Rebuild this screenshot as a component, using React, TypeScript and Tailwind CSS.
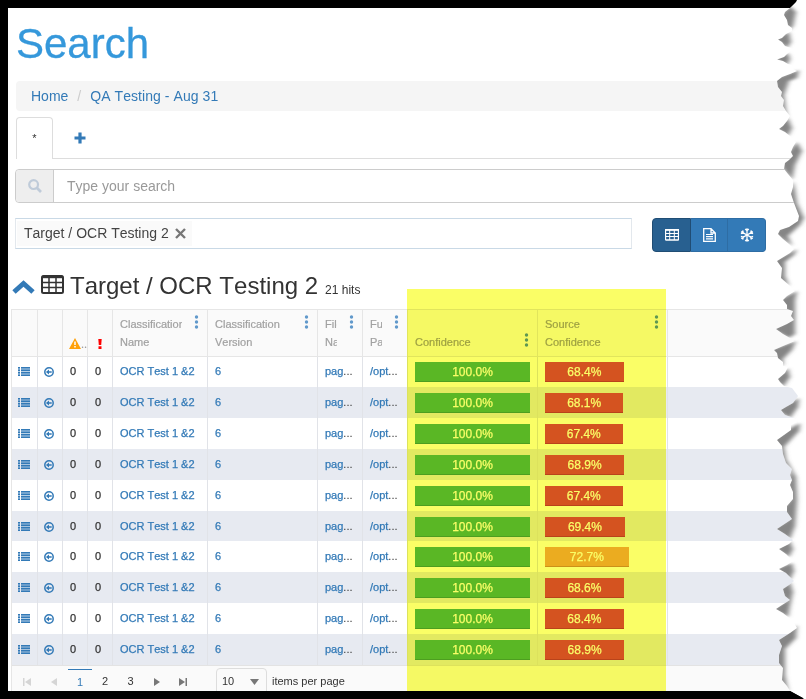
import React from "react";

const rows = [68.4, 68.1, 67.4, 68.9, 67.4, 69.4, 72.7, 68.6, 68.4, 68.9];

const COLS =
  "grid grid-cols-[26px_25px_25px_25px_95px_110px_45px_45px_130px_130px_1fr]";

// Left boundary of the torn paper edge, top to bottom.
const EDGE =
  "M797 0 L796 2 790 8 785 12 784 15 787 20 788 25 792 28 792 31 786 34 782 38 778 39.500 782 42 785 46 791 48 792 50 787 54 784 57 777 59.500 783 61 788 64 792 65 793 69 797 71 790 74 782 77 777 81 778 87 782 92 781 96 784 100 783 106 786 111 790 116 787 121 783 126 779 129 785 132 790 136 796 142 793 147 791 152 793 156 789 160 785 163 784 169 788 174 793 180 793 187 791 194 794 203 799 216 798 221 789 227 780 230 778 234 783 239 789 244 794 249 790 253 777 261 782 268 781 278 790 286 795 291 787 296 783 300 787 305 787 309 793 311 791 316 794 320 787 324 776 329 783 334 795 341 783 346 774 350 777 353 778 358 783 362 783 366 788 367 785 373 778 379 780 382 784 386 792 388 798 396 793 403 786 407 781 410 785 415 794 418 797 422 791 425 791 430 784 435 777 440 782 446 783 454 786 463 792 469 790 475 792 480 790 485 793 492 793 499 787 506 787 512 792 519 783 525 777 529 785 534 793 540 789 544 779 549 786 554 793 561 787 565 779 569 786 573 794 581 789 585 783 589 785 596 790 600 782 605 776 609 783 613 788 617 793 621 797 628 790 633 779 640 782 646 779 655 779 663 783 668 782 680 787 686 790 691 806 700 V700 H806 V0Z";

const SHADES = [
  "M790 6 L780 15 788 31 793 26 796 12Z",
  "M789 32 L774 39 787 48 791 42Z",
  "M788 53 L774 59 787 65 790 59Z",
  "M799 70 L773 79 780 112 787 119 784 95 789 81 797 78Z",
  "M788 118 L775 128 788 136 792 128Z",
  "M797 142 L789 151 780 165 792 180 795 165 802 151Z",
  "M793 181 L787 195 794 218 773 233 792 246 788 236 800 225 804 218 797 203 795 190Z",
  "M797 249 L773 261 777 279 789 286 785 276 785 262 794 255Z",
  "M797 291 L779 300 786 312 789 320 772 329 789 338 795 334 795 301Z",
  "M796 341 L770 350 774 360 783 366 783 359 792 350Z",
  "M788 368 L774 379 783 387 790 377Z",
  "M799 398 L776 410 790 418 798 407Z",
  "M800 423 L787 430 772 440 778 457 790 472 787 485 790 500 782 509 788 520 772 529 790 539 795 526 797 500 796 477 786 459 784 447 799 431Z",
  "M790 541 L775 549 789 557 793 549Z",
  "M792 563 L775 569 790 580 794 571Z",
  "M790 582 L778 590 786 601 772 609 788 617 790 606 793 592Z",
  "M797 625 L775 640 775 664 780 687 788 691 785 675 785 649 796 638Z",
];

function TornEdge() {
  return (
    <svg
      className="pointer-events-none absolute right-0 top-0 z-20"
      width="46"
      height="699"
      viewBox="760 0 46 699"
    >
      <defs>
        <clipPath id="paper-outside">
          <path d={EDGE} />
        </clipPath>
        <filter id="soft" x="-60%" y="-20%" width="220%" height="140%">
          <feGaussianBlur stdDeviation="2.5 1.3" />
        </filter>
      </defs>
      <path d={EDGE} fill="#fff" />
      <g clipPath="url(#paper-outside)">
        <g fill="#858585" filter="url(#soft)">
          {SHADES.map((d) => (
            <path key={d} d={d} />
          ))}
        </g>
      </g>
      <path d="M760 691 H790 L803 698 V699 H760Z" fill="#000" />
    </svg>
  );
}

function GridIcon() {
  return (
    <svg
      className="ml-[6px] mt-[9px] h-[19px] w-[23px]"
      viewBox="0 0 23 19"
      fill="none"
      stroke="currentColor"
    >
      <rect x="1" y="1" width="21" height="17" rx="1.5" strokeWidth="2" />
      <path d="M1 2H22" strokeWidth="2.400" />
      <path d="M1 7.500H22M1 12.500H22M8 2V18M15 2V18" strokeWidth="1.500" />
    </svg>
  );
}

function ListIcon() {
  return (
    <svg width="12" height="9" viewBox="0 0 12 9" fill="#337ab7">
      <path
        d="M0 0h2v9H0zM3 0h9v9H3z"
        opacity=".35"
      />
      <path d="M0 0h2v1.500H0zM0 2.500h2V4H0zM0 5h2v1.500H0zM0 7.500h2V9H0zM3 0h9v1.500H3zM3 2.500h9V4H3zM3 5h9v1.500H3zM3 7.500h9V9H3z" />
    </svg>
  );
}

function BackIcon() {
  return (
    <svg width="10" height="10" viewBox="0 0 10 10" fill="none" stroke="#337ab7">
      <circle cx="5" cy="5" r="4.200" strokeWidth="1.500" />
      <path d="M1.900 5 5 2.400V4.200H7.700V5.800H5V7.600Z" fill="#337ab7" stroke="none" />
    </svg>
  );
}

function Dots() {
  return (
    <svg width="5" height="14" viewBox="0 0 5 14" fill="#6199cb" className="shrink-0">
      <circle cx="2.500" cy="2" r="1.700" />
      <circle cx="2.500" cy="7" r="1.700" />
      <circle cx="2.500" cy="12" r="1.700" />
    </svg>
  );
}

function HeadCell({ lines, bottom }: { lines: string[]; bottom?: boolean }) {
  return (
    <div
      className={
        "flex min-w-0 justify-between border-r border-[#e6e6e6] pl-[7px] pr-[8px] " +
        (bottom ? "pt-[23px]" : "pt-[5px]")
      }
    >
      <div className="mr-[12px] min-w-0 overflow-hidden leading-[18px]">
        {lines.map((l) => (
          <div key={l} className="whitespace-nowrap">
            {l}
          </div>
        ))}
      </div>
      <Dots />
    </div>
  );
}

function Bar({ value }: { value: number }) {
  const color =
    value === 100
      ? "bg-[#5cb85c] border-[#4e9f4e]"
      : value > 70
        ? "bg-[#f0ad4e] border-[#cf923c]"
        : "bg-[#d9534f] border-[#bd433f]";
  return (
    <div className="h-full border-r border-[#e1e3e8] pl-[7px] pr-[7px] pt-[6px]">
      <div
        className={"h-[20px] border-b text-center text-[12px] leading-[20px] text-white " + color}
        style={{ width: `${value}%` }}
      >
        {value.toFixed(1)}%
      </div>
    </div>
  );
}

const cell = "h-full border-r border-[#e1e3e8] pl-[7px]";

export default function App() {
  return (
    <div className="relative h-[699px] w-[806px] overflow-hidden bg-black pl-[8px] pt-[8px] font-['Liberation_Sans',Arial,sans-serif] text-[#333] [font-kerning:none]">
      <div className="h-[683px] overflow-hidden bg-white">
        <h1 className="h-[73px] pl-[8px] pt-[12px] text-[42px] leading-[48px] text-[#3598db] [-webkit-text-stroke:0.3px]">
          Search
        </h1>
        <nav className="ml-[8px] flex h-[30px] items-center rounded bg-[#f5f5f5] pl-[15px] text-[14px] text-[#337ab7]">
          <span>Home</span>
          <span className="px-[9px] text-[#ccc]">/</span>
          <span className="tracking-[0.06px]">QA Testing - Aug 31</span>
        </nav>
        <div className="mt-[6px] flex h-[42px] pl-[8px]">
          <div className="w-[37px] rounded-t border border-b-0 border-[#ddd] pt-[12px] text-center text-[11px] leading-[16px]">
            *
          </div>
          <div className="flex-1 border-b border-[#ddd] pl-[21px] pt-[15px]">
            <svg width="12" height="12" viewBox="0 0 12 12">
              <path d="M6 .5V11.500M.5 6H11.500" stroke="#337ab7" strokeWidth="3.200" />
            </svg>
          </div>
        </div>
        <div className="ml-[7px] mt-[10px] flex h-[34px] rounded border border-[#ccc] text-[14px]">
          <div className="flex w-[38px] items-center justify-center rounded-l border-r border-[#ccc] bg-[#eee]">
            <svg width="14" height="14" viewBox="0 0 14 14" fill="none" stroke="#bfcbd9">
              <circle cx="5.600" cy="5.600" r="4.400" strokeWidth="2.200" />
              <path d="M8.800 8.800 13 13" strokeWidth="2.700" />
            </svg>
          </div>
          <div className="pl-[13px] leading-[32px] text-[#999]">Type your search</div>
        </div>
        <div className="mt-[15px] flex pl-[7px]">
          <div className="h-[31px] w-[617px] border border-x-[#e3e8ed] border-y-[#c9d9e6] px-px py-[2px]">
            <div className="flex h-[25px] w-[175px] items-center whitespace-nowrap bg-[#fafafa] pl-[7px] text-[14px] text-[#444]">
              Target / OCR Testing 2
              <svg className="ml-[6px] shrink-0" width="11" height="11" viewBox="0 0 11 11">
                <path d="M1 1 10 10M10 1 1 10" stroke="#777" strokeWidth="2.400" />
              </svg>
            </div>
          </div>
          <div className="ml-[20px] flex h-[34px] text-white">
            <div className="flex w-[39px] items-center justify-center rounded-l border border-[#204d74] bg-[#286090]">
              <svg width="14" height="12" viewBox="0 0 14 12" fill="none" stroke="white">
                <rect x=".5" y=".5" width="13" height="10.500" rx=".5" strokeWidth="1.300" />
                <path d="M0 1H14" strokeWidth="1.600" />
                <path d="M0 4.500H14M0 7.500H14M4.700 1V11M9.300 1V11" />
              </svg>
            </div>
            <div className="flex w-[37px] items-center justify-center border-y border-r border-[#2e6da4] bg-[#337ab7]">
              <svg width="13" height="14" viewBox="0 0 13 14" fill="none" stroke="white">
                <path d="M.7 .7H8L12.300 5V13.300H.7ZM8 .7V5H12.300" strokeWidth="1.300" />
                <path d="M3 6.500H10M3 8.700H10M3 10.900H10" strokeWidth="1.200" />
              </svg>
            </div>
            <div className="flex w-[38px] items-center justify-center rounded-r border-y border-r border-[#2e6da4] bg-[#337ab7]">
              <svg width="14" height="14" viewBox="-7 -7 14 14" fill="none" stroke="white" strokeWidth="1.300">
                {[0, 60, 120, 180, 240, 300].map((a) => (
                  <path key={a} transform={`rotate(${a})`} d="M0 0V-6.800M-1.800 -6 0 -4.300 1.800 -6" />
                ))}
              </svg>
            </div>
          </div>
        </div>
        <div className="mt-[14px] flex h-[43px] pl-[4px]">
          <svg className="mt-[14px]" width="23" height="14" viewBox="0 0 23 14" fill="none">
            <path d="M2 12 11.500 3.500 21 12" stroke="#337ab7" strokeWidth="5" />
          </svg>
          <GridIcon />
          <h2 className="ml-[6px] whitespace-nowrap pt-[6px] text-[24px] leading-[28px]">
            Target / OCR Testing 2
          </h2>
          <span className="ml-[7px] pt-[16px] text-[12px] leading-[16px]">21 hits</span>
        </div>
        <div className="ml-[3px] border-l border-[#e6e6e6] text-[11px]">
          <div
            className={
              COLS +
              " relative z-10 h-[48px] border-y border-[#e6e6e6] bg-[#fafafa] text-[#a1a1a1] [-webkit-text-stroke:0.2px]"
            }
          >
            <div className="border-r border-[#e6e6e6]" />
            <div className="border-r border-[#e6e6e6]" />
            <div className="flex overflow-hidden border-r border-[#e6e6e6] pl-[6px] pt-[28px]">
              <svg className="shrink-0" width="12" height="11" viewBox="0 0 12 11">
                <path d="M6 0 12 11H0Z" fill="#ffa10a" />
                <path d="M6 3.500V7M6 8V9.500" stroke="white" strokeWidth="1.500" />
              </svg>
              <span className="leading-[12px]">...</span>
            </div>
            <div className="border-r border-[#e6e6e6] pl-[10px] pt-[29px]">
              <svg width="4" height="10" viewBox="0 0 4 10" fill="#f00">
                <path d="M.3 0H3.700L3.200 6H.8ZM.5 7.300H3.500V10H.5Z" />
              </svg>
            </div>
            <HeadCell lines={["Classification", "Name"]} />
            <HeadCell lines={["Classification", "Version"]} />
            <HeadCell lines={["File", "Name"]} />
            <HeadCell lines={["Full", "Path"]} />
            <HeadCell lines={["Confidence"]} bottom />
            <HeadCell lines={["Source", "Confidence"]} />
            <div />
          </div>
          <div className="-mt-[0.875px] [-webkit-text-stroke:0.25px]">
            {rows.map((v, i) => (
              <div
                key={i}
                className={
                  COLS +
                  " h-[30.875px] leading-[31px] " +
                  (i % 2 ? "bg-[#e7eaf1]" : "bg-white")
                }
              >
                <div className="h-full border-r border-[#e1e3e8] pl-[6px] pt-[11px]">
                  <ListIcon />
                </div>
                <div className="h-full border-r border-[#e1e3e8] pl-[6px] pt-[11px]">
                  <BackIcon />
                </div>
                <div className={cell}>0</div>
                <div className={cell}>0</div>
                <div className={cell + " whitespace-nowrap text-[#337ab7]"}>OCR Test 1 &amp;2</div>
                <div className={cell + " text-[#337ab7]"}>6</div>
                <div className={cell}>
                  <span className="text-[#337ab7]">pag</span>
                  <span className="[-webkit-text-stroke:0]">...</span>
                </div>
                <div className={cell}>
                  <span className="text-[#337ab7]">/opt</span>
                  <span className="[-webkit-text-stroke:0]">...</span>
                </div>
                <Bar value={100} />
                <Bar value={v} />
                <div />
              </div>
            ))}
          </div>
          <div className="flex h-[40px] border-t border-[#e3e3e3] bg-[#fafafa] pt-[2px] leading-[26px]">
            <svg className="ml-[11px] mt-[10px]" width="8" height="8" viewBox="0 0 8 8" fill="#d5d5d5">
              <path d="M0 0H1.500V8H0ZM8 0V8L2 4Z" />
            </svg>
            <svg className="ml-[20px] mt-[10px]" width="6" height="8" viewBox="0 0 6 8" fill="#d5d5d5">
              <path d="M6 0V8L0 4Z" />
            </svg>
            <div className="ml-[11px] mt-px w-[24px] border-t border-[#337ab7] text-center leading-[24px] text-[#337ab7]">
              1
            </div>
            <div className="w-[26px] text-center">2</div>
            <div className="w-[25px] text-center">3</div>
            <svg className="ml-[11px] mt-[10px]" width="6" height="8" viewBox="0 0 6 8" fill="#777">
              <path d="M0 0V8L6 4Z" />
            </svg>
            <svg className="ml-[19px] mt-[10px]" width="8" height="8" viewBox="0 0 8 8" fill="#777">
              <path d="M8 0H6.500V8H8ZM0 0V8L6 4Z" />
            </svg>
            <div className="ml-[29px] flex w-[51px] justify-between rounded-t border border-[#ddd] pl-[5px] pr-[7px] leading-[25px]">
              10
              <svg className="mt-[10px]" width="9" height="6" viewBox="0 0 9 6" fill="#777">
                <path d="M0 0H9L4.500 6Z" />
              </svg>
            </div>
            <div className="ml-[5px]">items per page</div>
          </div>
        </div>
      </div>
      {/* Highlighter over the two confidence columns */}
      <div className="absolute left-[407px] top-[289px] z-10 h-[402px] w-[259px] bg-[#fafe66] mix-blend-multiply" />
      <TornEdge />
    </div>
  );
}
